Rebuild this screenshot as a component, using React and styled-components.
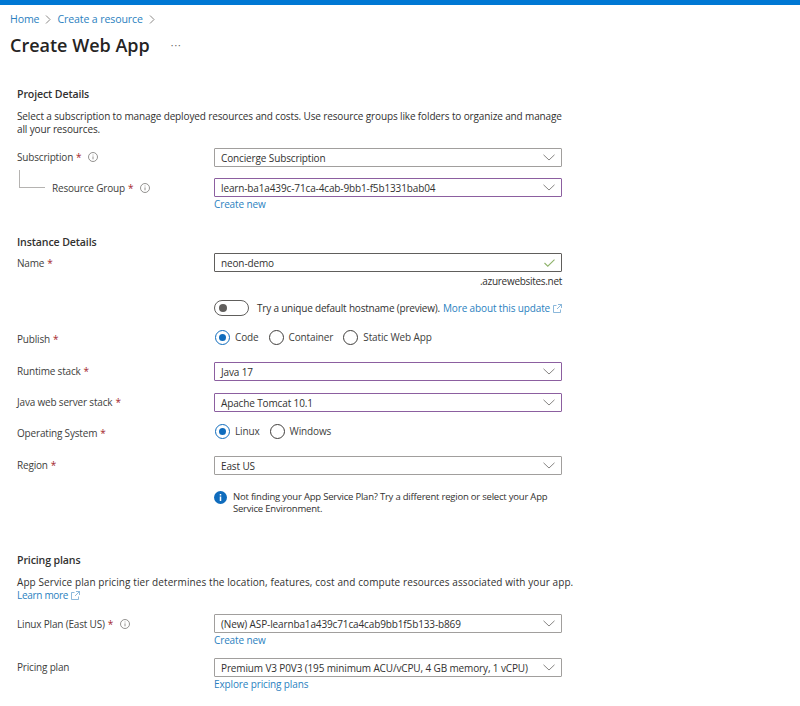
import React from 'react';
import styled, { createGlobalStyle } from 'styled-components';

const GlobalStyle = createGlobalStyle`
  html, body {
    margin: 0;
    padding: 0;
    background: #fff;
  }
  body {
    font-family: "Open Sans", "Noto Sans", "Liberation Sans", sans-serif;
    font-size: 10px;
    letter-spacing: -0.13px;
    color: #323130;
  }
`;

const Page = styled.div`
  width: 800px;
  height: 706px;
  overflow: hidden;
  background: #fff;
`;

const TopBar = styled.div`
  height: 5px;
  background: #0078d4;
`;

const Breadcrumb = styled.nav`
  display: flex;
  align-items: center;
  height: 14px;
  margin: 7px 0 0 10px;
  font-size: 10.6px;
`;

const Crumb = styled.a`
  color: #2b7fc0;
`;

const CrumbChevron = styled.svg`
  width: 6px;
  height: 9px;
  margin: 0 6px 0 6px;
  fill: none;
  stroke: #8a8886;
  stroke-width: 1;
`;

const TitleRow = styled.div`
  display: flex;
  align-items: center;
  height: 28px;
  margin: 5px 0 0 10px;
`;

const Title = styled.h1`
  margin: 0;
  font-size: 18px;
  line-height: 28px;
  font-weight: 600;
  letter-spacing: 0;
  color: #252423;
`;

const More = styled.span`
  margin-left: 21px;
  font-size: 10px;
  line-height: 10px;
  letter-spacing: 1px;
  color: #605e5c;
`;

const Form = styled.form`
  padding-left: 17px;
  width: 545px;
`;

const Heading = styled.h2`
  margin: ${(p) => p.$mt}px 0 0;
  font-size: 10.6px;
  line-height: 14px;
  font-weight: 600;
  color: #323130;
`;

const Paragraph = styled.p`
  margin: 9px 0 0;
  line-height: 13px;
  letter-spacing: ${(p) => p.$ls ?? -0.13}px;
  color: #323130;
  white-space: nowrap;
`;

const Row = styled.div`
  display: grid;
  grid-template-columns: 197px 348px;
  align-items: center;
  margin-top: ${(p) => p.$mt || 0}px;
`;

const Label = styled.label`
  position: relative;
  display: flex;
  align-items: center;
  margin-top: ${(p) => p.$shift || 0}px;
  margin-bottom: ${(p) => -(p.$shift || 0)}px;
  padding-left: ${(p) => (p.$nested ? 35 : 0)}px;
  letter-spacing: -0.18px;
  color: #403e3c;
  white-space: nowrap;

  ${(p) => p.$nested && `
    &::before {
      content: '';
      position: absolute;
      left: 2px;
      top: -11px;
      width: 25px;
      height: 17px;
      border-left: 1px solid #b5b3b1;
      border-bottom: 1px solid #b5b3b1;
    }
  `}
`;

const Star = styled.span`
  margin-left: 3px;
  color: #a4262c;
`;

const Tip = styled.svg`
  width: 10px;
  height: 10px;
  margin-left: 7px;
  fill: none;
  stroke: #797775;
  stroke-width: 0.8;
`;

const Field = styled.div`
  box-sizing: border-box;
  display: flex;
  align-items: center;
  justify-content: space-between;
  height: 19px;
  padding: 0 6px 0 6px;
  border: 1px solid ${(p) => (p.$dirty ? '#8c5fa0' : p.$dark ? '#605e5c' : '#a19f9d')};
  border-radius: 1px;
  color: #323130;
  white-space: nowrap;
`;

const Chevron = styled.svg`
  width: 12px;
  height: 7px;
  fill: none;
  stroke: #797775;
  stroke-width: 0.9;
`;

const Check = styled.svg`
  width: 11px;
  height: 8px;
  fill: none;
  stroke: #8fb36b;
  stroke-width: 1.1;
`;

const LinkLine = styled.div`
  grid-column: 2;
  height: 14px;
  line-height: 14px;
  color: #2b7fc0;
`;

const Suffix = styled.div`
  grid-column: 2;
  height: 14px;
  margin-top: 2px;
  line-height: 14px;
  letter-spacing: -0.3px;
  text-align: right;
`;

const Inline = styled.div`
  grid-column: 2;
  display: flex;
  align-items: center;
  height: 16px;
  white-space: nowrap;
`;

const Toggle = styled.span`
  box-sizing: border-box;
  display: flex;
  align-items: center;
  flex: none;
  width: 35px;
  height: 16px;
  padding-left: 4px;
  margin-right: 8px;
  border: 1px solid #605e5c;
  border-radius: 8px;

  &::before {
    content: '';
    width: 8px;
    height: 8px;
    border-radius: 50%;
    background: #605e5c;
  }
`;

const ToggleText = styled.span`
  letter-spacing: -0.2px;
`;

const TextLink = styled.a`
  margin-left: ${(p) => (p.$flush ? 0 : 3)}px;
  letter-spacing: ${(p) => (p.$flush ? -0.3 : -0.13)}px;
  color: #2b7fc0;
`;

const External = styled.svg`
  width: 9px;
  height: 9px;
  margin-left: 3px;
  vertical-align: -1px;
  fill: none;
  stroke: #6ea6d2;
  stroke-width: 0.8;
`;

const RadioItem = styled.span`
  display: flex;
  align-items: center;
  margin-right: 9px;
  color: #403e3c;
`;

const RadioMark = styled.span`
  box-sizing: border-box;
  display: flex;
  align-items: center;
  justify-content: center;
  width: 15px;
  height: 15px;
  margin: 0 5px 0 1px;
  border: 1px solid ${(p) => (p.$on ? '#0f6cbd' : '#403e3c')};
  border-radius: 50%;

  &::after {
    content: '';
    display: ${(p) => (p.$on ? 'block' : 'none')};
    width: 7px;
    height: 7px;
    border-radius: 50%;
    background: #0f6cbd;
  }
`;

const Notice = styled.div`
  grid-column: 2;
  display: flex;
  font-size: 9.5px;
  line-height: 12px;
  letter-spacing: -0.21px;
  white-space: nowrap;
`;

const NoticeIcon = styled.svg`
  flex: none;
  width: 13px;
  height: 13px;
  margin-right: 6px;
`;

const ChevronIcon = () => (
  <Chevron viewBox="0 0 12 7"><path d="M0.5 0.8 6 6 11.5 0.8" /></Chevron>
);

const TipIcon = () => (
  <Tip viewBox="0 0 10 10">
    <circle cx="5" cy="5" r="4.5" />
    <path d="M5 4.4V7.3M5 2.6V3.4" />
  </Tip>
);

const ExternalIcon = () => (
  <External viewBox="0 0 9 9">
    <path d="M3.5 1.5H0.5V8.5H7.5V5.5M5 0.5H8.5V4M8.5 0.5 4 5" />
  </External>
);

const Select = ({ children, dirty }) => (
  <Field $dirty={dirty}>
    <span>{children}</span>
    <ChevronIcon />
  </Field>
);

const Radio = ({ on, children }) => (
  <RadioItem>
    <RadioMark $on={on} />
    {children}
  </RadioItem>
);

export default function App() {
  return (
    <Page>
      <GlobalStyle />
      <TopBar />
      <Breadcrumb>
        <Crumb>Home</Crumb>
        <CrumbChevron viewBox="0 0 6 9"><path d="M1 0.5 5 4.5 1 8.5" /></CrumbChevron>
        <Crumb>Create a resource</Crumb>
        <CrumbChevron viewBox="0 0 6 9"><path d="M1 0.5 5 4.5 1 8.5" /></CrumbChevron>
      </Breadcrumb>
      <TitleRow>
        <Title>Create Web App</Title>
        <More>···</More>
      </TitleRow>
      <Form>
        <Heading $mt={28}>Project Details</Heading>
        <Paragraph>
          Select a subscription to manage deployed resources and costs. Use resource groups like folders to organize and manage
          <br />
          all your resources.
        </Paragraph>
        <Row $mt={12}>
          <Label $shift={-1}>Subscription<Star>*</Star><TipIcon /></Label>
          <Select>Concierge Subscription</Select>
        </Row>
        <Row $mt={11}>
          <Label $nested>Resource Group<Star>*</Star><TipIcon /></Label>
          <Select dirty>learn-ba1a439c-71ca-4cab-9bb1-f5b1331bab04</Select>
          <LinkLine>Create new</LinkLine>
        </Row>

        <Heading $mt={24}>Instance Details</Heading>
        <Row $mt={4}>
          <Label>Name<Star>*</Star></Label>
          <Field $dark>
            <span>neon-demo</span>
            <Check viewBox="0 0 11 8"><path d="M0.5 4 3.8 7.2 10.5 0.6" /></Check>
          </Field>
          <Suffix>.azurewebsites.net</Suffix>
        </Row>
        <Row $mt={12}>
          <Inline>
            <Toggle />
            <ToggleText>Try a unique default hostname (preview).</ToggleText>
            <TextLink>More about this update<ExternalIcon /></TextLink>
          </Inline>
        </Row>
        <Row $mt={13}>
          <Label $shift={2}>Publish<Star>*</Star></Label>
          <Inline>
            <Radio on>Code</Radio>
            <Radio>Container</Radio>
            <Radio>Static Web App</Radio>
          </Inline>
        </Row>
        <Row $mt={17}>
          <Label $shift={-1}>Runtime stack<Star>*</Star></Label>
          <Select dirty>Java 17</Select>
        </Row>
        <Row $mt={12}>
          <Label $shift={-1}>Java web server stack<Star>*</Star></Label>
          <Select dirty>Apache Tomcat 10.1</Select>
        </Row>
        <Row $mt={11}>
          <Label $shift={2}>Operating System<Star>*</Star></Label>
          <Inline>
            <Radio on>Linux</Radio>
            <Radio>Windows</Radio>
          </Inline>
        </Row>
        <Row $mt={17}>
          <Label $shift={-1}>Region<Star>*</Star></Label>
          <Select>East US</Select>
        </Row>
        <Row $mt={16}>
          <Notice>
            <NoticeIcon viewBox="0 0 13 13">
              <circle cx="6.5" cy="6.5" r="6.5" fill="#0f6cbd" />
              <path d="M6.5 5.6V10M6.5 3V4.4" stroke="#fff" strokeWidth="1.5" />
            </NoticeIcon>
            <span>
              Not finding your App Service Plan? Try a different region or select your App
              <br />
              Service Environment.
            </span>
          </Notice>
        </Row>

        <Heading $mt={38}>Pricing plans</Heading>
        <Paragraph $ls={0.09}>
          App Service plan pricing tier determines the location, features, cost and compute resources associated with your app.
          <br />
          <TextLink $flush>Learn more<ExternalIcon /></TextLink>
        </Paragraph>
        <Row $mt={12}>
          <Label>Linux Plan (East US)<Star>*</Star><TipIcon /></Label>
          <Select>(New) ASP-learnba1a439c71ca4cab9bb1f5b133-b869</Select>
          <LinkLine>Create new</LinkLine>
        </Row>
        <Row $mt={11}>
          <Label $shift={-1}>Pricing plan</Label>
          <Select>Premium V3 P0V3 (195 minimum ACU/vCPU, 4 GB memory, 1 vCPU)</Select>
          <LinkLine>Explore pricing plans</LinkLine>
        </Row>
      </Form>
    </Page>
  );
}
